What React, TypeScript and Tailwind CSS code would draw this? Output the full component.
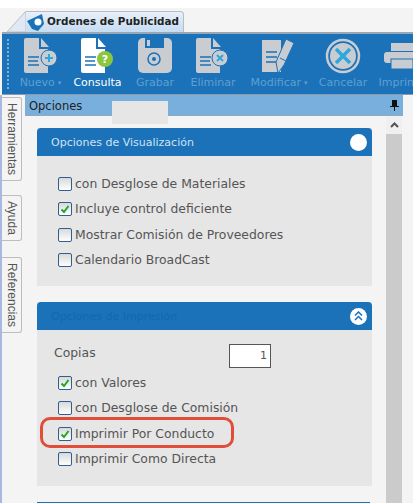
import React from "react";

const font = "font-['DejaVu_Sans',sans-serif]";

const CheckRow = ({ label, checked }: { label: string; checked?: boolean }) => (
  <div className="flex items-center h-[25.5px] gap-[3px]">
    <div className="w-[14px] h-[14px] rounded-[2px] border border-[#2f5f8f] bg-[linear-gradient(#d8d8d8,#ffffff)] flex items-center justify-center">
      {checked && (
        <svg width="10" height="10" viewBox="0 0 10 10">
          <path d="M1.5 5.5 L4 8 L8.5 2" fill="none" stroke="#22a52a" strokeWidth="2" />
        </svg>
      )}
    </div>
    <span className="text-[12.4px] leading-none text-[#555] whitespace-nowrap">{label}</span>
  </div>
);

const DocIcon = ({ color, badge }: { color: string; badge: React.ReactNode }) => (
  <svg width="36" height="36" viewBox="0 0 36 36">
    <path d="M1 2 Q1 0 3 0 H16 V11 H25 V35 H3 Q1 35 1 33 Z" fill={color} />
    <path d="M18 0 L26 9 H18 Z" fill={color} />
    <path d="M5 19 H16 M5 23 H15 M5 27 H16" stroke="#1b72b8" strokeWidth="1.5" />
    {badge}
  </svg>
);

const ToolButton = ({
  label,
  active,
  caret,
  width,
  icon,
}: {
  label: string;
  active?: boolean;
  caret?: boolean;
  width: string;
  icon: React.ReactNode;
}) => (
  <div className={`flex flex-col items-center shrink-0 ${width}`}>
    <div className="h-[36px] flex items-center justify-center">{icon}</div>
    <div
      className={`mt-[2px] text-[11px] leading-[14px] whitespace-nowrap ${
        active ? "text-white" : "text-[#5f9fd0]"
      }`}
    >
      {label}
      {caret && <span className="ml-[3px] text-[7px] align-middle">▾</span>}
    </div>
  </div>
);

const Panel = ({
  title,
  titleClass,
  icon,
  children,
}: {
  title: string;
  titleClass: string;
  icon: React.ReactNode;
  children: React.ReactNode;
}) => (
  <div className="w-[335px] bg-[#e6e6e6]">
    <div className="h-[28px] bg-[#1b72b8] rounded-t-[4px] flex items-center justify-between pl-[14px] pr-[5px]">
      <span className={`text-[11px] pt-[2px] ${titleClass}`}>{title}</span>
      {icon}
    </div>
    {children}
  </div>
);

const SideTab = ({ label, className }: { label: string; className: string }) => (
  <div
    className={`w-[20px] bg-[#f4f4f4] border border-l-0 border-[#bdbdbd] rounded-r-[3px] flex items-center justify-center ${className}`}
  >
    <span className="[writing-mode:vertical-rl] text-[12px] leading-none text-[#555] font-['Liberation_Sans',sans-serif]">
      {label}
    </span>
  </div>
);

export default function App() {
  return (
    <div className={`relative w-[413px] h-[503px] overflow-hidden bg-[#f4f4f4] ${font}`}>
      <div className="h-[8px] bg-white" />
      {/* document tab */}
      <div className="h-[24px] flex items-end pl-[7px]">
        <svg width="19" height="21" viewBox="0 0 19 21" className="shrink-0">
          <path d="M0 21 L18 1 Q18.500 0.500 19 0.500 V21 Z" fill="#dfe9f5" stroke="#bcbcbc" />
        </svg>
        <div className="h-[21px] w-[158px] bg-[linear-gradient(#e8f0fa,#c5dcf2)] border border-l-0 border-b-0 border-[#bcbcbc] rounded-tr-[4px] flex items-center gap-[3px] pl-[1px]">
          <svg width="17" height="17" viewBox="0 0 17 17" className="shrink-0">
            <path d="M0 7 L15 0 L17 10 L11 17 L5 15 Z" fill="#1b72b8" />
            <circle cx="11" cy="8" r="3.500" fill="#fff" />
          </svg>
          <span className="text-[10.4px] font-bold text-[#222] whitespace-nowrap">Ordenes de Publicidad</span>
        </div>
      </div>
      {/* toolbar */}
      <div className="h-[63px] ml-[2px] bg-[#1b72b8] border-t-2 border-b border-t-[#9aa7b5] border-b-[#8a9aaa] flex pt-[4px] overflow-hidden">
        <div className="ml-[5px] mr-[3px] mt-[1px] h-[50px] w-[2px] shrink-0 border-l-2 border-dotted border-[#7fb0d8]" />
        <ToolButton
          label="Nuevo"
          caret
          width="w-[57px]"
          icon={
            <DocIcon
              color="#c9cdd1"
              badge={
                <>
                  <circle cx="26" cy="20" r="8" fill="#c9cdd1" stroke="#1b72b8" />
                  <path d="M22 20 H30 M26 16 V24" stroke="#2ea7dd" strokeWidth="2" />
                </>
              }
            />
          }
        />
        <ToolButton
          label="Consulta"
          active
          width="w-[57px]"
          icon={
            <DocIcon
              color="#ffffff"
              badge={
                <>
                  <circle cx="25" cy="21" r="8" fill="#8cc63f" />
                  <text x="25" y="25" fontSize="11" fontWeight="bold" fill="#fff" textAnchor="middle">
                    ?
                  </text>
                </>
              }
            />
          }
        />
        <ToolButton
          label="Grabar"
          width="w-[58px]"
          icon={
            <svg width="36" height="36" viewBox="0 0 36 36">
              <rect x="1" y="0" width="34" height="35" rx="5" fill="#c9cdd1" />
              <rect x="8" y="0" width="19" height="10" fill="#1b72b8" />
              <rect x="10" y="2" width="3" height="6" fill="#c9cdd1" />
              <circle cx="17" cy="21" r="6" fill="none" stroke="#1b72b8" strokeWidth="1.5" />
              <circle cx="17" cy="21" r="2" fill="#1b72b8" />
            </svg>
          }
        />
        <ToolButton
          label="Eliminar"
          width="w-[58px]"
          icon={
            <DocIcon
              color="#c9cdd1"
              badge={
                <>
                  <circle cx="25" cy="20" r="8" fill="#c9cdd1" stroke="#1b72b8" />
                  <path d="M22 17 L28 23 M28 17 L22 23" stroke="#2ea7dd" strokeWidth="2" />
                </>
              }
            />
          }
        />
        <ToolButton
          label="Modificar"
          caret
          width="w-[74px]"
          icon={
            <svg width="36" height="36" viewBox="0 0 36 36">
              <path d="M1 2 H20 V34 H1 Z" fill="#c9cdd1" />
              <path d="M5 14 H16 M5 19 H16 M5 24 H16" stroke="#1b72b8" strokeWidth="1.5" />
              <path d="M25 1 L33 5 L23 27 L17 35 L15 24 Z" fill="#c9cdd1" stroke="#1b72b8" />
              <path d="M19 20 L27 24" stroke="#1b72b8" />
            </svg>
          }
        />
        <ToolButton
          label="Cancelar"
          width="w-[54px]"
          icon={
            <svg width="36" height="36" viewBox="0 0 36 36">
              <circle cx="18" cy="18" r="16" fill="#1b72b8" stroke="#c9cdd1" strokeWidth="2.500" />
              <circle cx="18" cy="18" r="13" fill="#c9cdd1" />
              <path d="M11 11 L25 25 M25 11 L11 25" stroke="#2ea7dd" strokeWidth="3.500" />
            </svg>
          }
        />
        <ToolButton
          label="Imprimir"
          width="w-[64px]"
          icon={
            <svg width="36" height="36" viewBox="0 0 36 36">
              <rect x="7" y="5" width="22" height="8" fill="#c9cdd1" />
              <rect x="0" y="14" width="36" height="11" rx="3" fill="#c9cdd1" />
              <rect x="7" y="21" width="22" height="10" fill="#c9cdd1" stroke="#1b72b8" />
            </svg>
          }
        />
      </div>
      <div className="flex">
        {/* side tabs */}
        <div className="w-[25px] h-[408px] shrink-0 border-l-2 border-[#a9b8e0] pt-[2px] flex flex-col">
          <SideTab label="Herramientas" className="h-[84px]" />
          <SideTab label="Ayuda" className="h-[46px] mt-[14px]" />
          <SideTab label="Referencias" className="h-[76px] mt-[16px]" />
        </div>
        <div className="w-[378px] shrink-0">
          <div className="relative h-[21px] bg-[#78afdc] border-b border-[#8fa9c0] flex items-center justify-between pl-[4px] pr-[4px]">
            <span className="text-[11.500px] text-[#222] pt-[3px]">Opciones</span>
            <svg width="9" height="11" viewBox="0 0 9 11">
              <path d="M2 0 H7 V6 H9 V7 H5 V11 H4 V7 H0 V6 H2 Z" fill="#111" />
            </svg>
            <div className="absolute left-[87px] top-[6px] w-[56px] h-[23px] bg-[#e6e6e6]" />
          </div>
          <div className="flex">
            <div className="w-[361px] shrink-0 pl-[12px] pt-[12px] flex flex-col gap-[16px]">
              <Panel
                title="Opciones de Visualización"
                titleClass="text-[#cfe3f3]"
                icon={<div className="w-[17px] h-[17px] rounded-full bg-white" />}
              >
                <div className="pl-[21px] pt-[15px] pb-[13px]">
                  <CheckRow label="con Desglose de Materiales" />
                  <CheckRow label="Incluye control deficiente" checked />
                  <CheckRow label="Mostrar Comisión de Proveedores" />
                  <CheckRow label="Calendario BroadCast" />
                </div>
              </Panel>
              <Panel
                title="Opciones de Impresión"
                titleClass="text-[#1268b0]"
                icon={
                  <div className="w-[17px] h-[17px] rounded-full bg-white flex items-center justify-center">
                    <svg width="9" height="10" viewBox="0 0 9 10">
                      <path d="M1 4.500 L4.500 1 L8 4.500 M1 9 L4.500 5.500 L8 9" fill="none" stroke="#1b72b8" strokeWidth="1.500" />
                    </svg>
                  </div>
                }
              >
                <div className="pl-[21px] pt-[14px] pb-[14px]">
                  <div className="flex items-start h-[26px] -ml-[4px]">
                    <span className="text-[12.400px] text-[#555] w-[175px] leading-[18px]">Copias</span>
                    <div className="w-[42px] h-[24px] bg-white border border-[#555] text-[11px] text-[#555] text-right pr-[3px] leading-[22px]">
                      1
                    </div>
                  </div>
                  <CheckRow label="con Valores" checked />
                  <CheckRow label="con Desglose de Comisión" />
                  <CheckRow label="Imprimir Por Conducto" checked />
                  <CheckRow label="Imprimir Como Directa" />
                </div>
              </Panel>
              <div className="w-[333px] h-[4px] bg-[#1b72b8]" />
            </div>
            {/* scrollbar */}
            <div className="w-[16px] flex flex-col">
              <div className="h-[18px] bg-[#f0f0f0] flex items-center justify-center">
                <svg width="9" height="6" viewBox="0 0 9 6">
                  <path d="M1 5 L4.500 1.500 L8 5" fill="none" stroke="#555" strokeWidth="2" />
                </svg>
              </div>
              <div className="flex-1 bg-[#cbcbcb]" />
            </div>
          </div>
        </div>
      </div>
      <div className="absolute left-[40px] top-[417px] w-[194px] h-[31px] border-[3px] border-[#e04e39] rounded-[10px]" />
    </div>
  );
}
